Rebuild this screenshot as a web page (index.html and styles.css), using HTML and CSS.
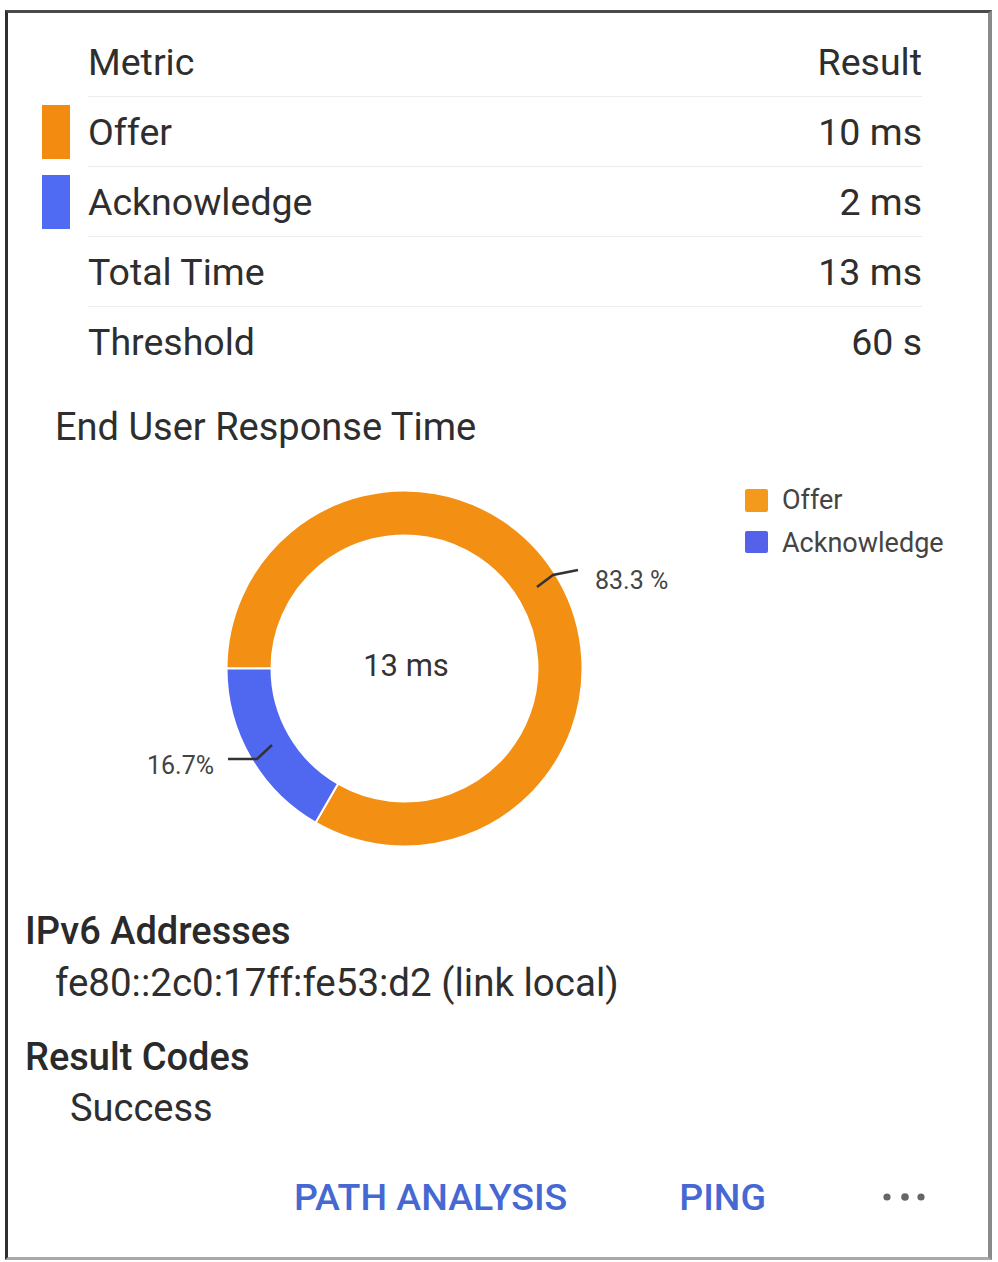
FILE: index.html
```html
<!DOCTYPE html>
<html lang="en">
<head>
<meta charset="utf-8">
<title>End User Response Time</title>
<link rel="stylesheet" href="styles.css">
</head>
<body>
<div class="frame">
  <div class="metrics">
    <div class="mrow">
      <span class="swatch"></span>
      <div class="mrow-main"><span class="label">Metric</span><span class="value">Result</span></div>
    </div>
    <div class="mrow">
      <span class="swatch offer"></span>
      <div class="mrow-main"><span class="label">Offer</span><span class="value">10 ms</span></div>
    </div>
    <div class="mrow">
      <span class="swatch ack"></span>
      <div class="mrow-main"><span class="label">Acknowledge</span><span class="value">2 ms</span></div>
    </div>
    <div class="mrow">
      <span class="swatch"></span>
      <div class="mrow-main"><span class="label">Total Time</span><span class="value">13 ms</span></div>
    </div>
    <div class="mrow last">
      <span class="swatch"></span>
      <div class="mrow-main"><span class="label">Threshold</span><span class="value">60 s</span></div>
    </div>
  </div>

  <section class="chart">
    <h2 class="chart-title">End User Response Time</h2>
    <svg class="chart-svg" width="980" height="454" viewBox="0 0 980 454">
      <path class="seg-offer" d="M 218.5 216.5 A 178 178 0 1 1 307.5 370.65 L 330 331.68 A 133 133 0 1 0 263.5 216.5 Z"/>
      <path class="seg-ack" d="M 307.5 370.65 A 178 178 0 0 1 218.5 216.5 L 263.5 216.5 A 133 133 0 0 0 330 331.68 Z"/>
      <text class="center-label" x="398" y="213">13 ms</text>
      <polyline class="leader" points="529,135 545,123 570,118"/>
      <text class="pct" x="587" y="128">83.3 %</text>
      <polyline class="leader" points="220,307 249,307 264,293"/>
      <text class="pct end" x="206" y="313">16.7%</text>
      <rect class="lg-offer" x="737" y="37" width="23" height="23" rx="2"/>
      <text class="legend" x="774" y="48">Offer</text>
      <rect class="lg-ack" x="737" y="79" width="23" height="22" rx="2"/>
      <text class="legend" x="774" y="91">Acknowledge</text>
    </svg>
  </section>

  <section class="info">
    <div class="info-group">
      <div class="info-head">IPv6 Addresses</div>
      <div class="info-addr">fe80::2c0:17ff:fe53:d2 (link local)</div>
    </div>
    <div class="info-group">
      <div class="info-head">Result Codes</div>
      <div class="info-code">Success</div>
    </div>
  </section>

  <div class="actions">
    <span class="action">PATH ANALYSIS</span>
    <span class="action">PING</span>
    <svg class="more" width="50" height="14" viewBox="0 0 50 14">
      <circle cx="9" cy="7" r="3.6"/>
      <circle cx="27" cy="7" r="3.8"/>
      <circle cx="43" cy="7" r="3.6"/>
    </svg>
  </div>
</div>
</body>
</html>
```

FILE: styles.css
```css
html, body {
  margin: 0;
  padding: 0;
  background: #ffffff;
}

body {
  font-family: Roboto, "Liberation Sans", Arial, sans-serif;
  color: #2e2e2e;
}

.frame {
  box-sizing: border-box;
  margin: 10px 0 0 5px;
  width: 987px;
  height: 1250px;
  border-left: 3px solid #2f2f2f;
  border-top: 3px solid #4a4a4a;
  border-right: 4px solid #8a8a8a;
  border-bottom: 3px solid #a9a9a9;
  background: #fff;
}

/* metrics table */
.metrics {
  padding: 14px 66px 0 34px;
}

.mrow {
  display: flex;
  align-items: center;
  height: 70px;
}

.swatch {
  flex: none;
  width: 28px;
  height: 54px;
  margin-right: 18px;
}

.swatch.offer {
  background: #f38b10;
}

.swatch.ack {
  background: #4f6bf3;
}

.mrow-main {
  flex: 1;
  align-self: stretch;
  display: flex;
  justify-content: space-between;
  align-items: center;
  border-bottom: 1px solid #ececec;
  font-size: 37.5px;
}

.mrow.last .mrow-main {
  border-bottom: none;
}

/* chart */
.chart {
  margin-top: 25px;
}

.chart-title {
  margin: 0;
  padding-left: 47px;
  font-size: 38px;
  font-weight: 400;
  line-height: 50px;
  height: 50px;
  color: #2e2e2e;
}

.chart-svg {
  display: block;
}

.seg-offer {
  fill: #f39014;
  stroke: #ffffff;
  stroke-width: 2;
}

.seg-ack {
  fill: #5067ef;
  stroke: #ffffff;
  stroke-width: 2;
}

.center-label {
  font-family: Roboto, "Liberation Sans", Arial, sans-serif;
  font-size: 31px;
  fill: #333;
  text-anchor: middle;
  dominant-baseline: central;
}

.leader {
  fill: none;
  stroke: #333;
  stroke-width: 2.5;
}

.pct {
  font-family: Roboto, "Liberation Sans", Arial, sans-serif;
  font-size: 25px;
  fill: #444;
  dominant-baseline: central;
}

.pct.end {
  text-anchor: end;
}

.lg-offer {
  fill: #f39a1c;
}

.lg-ack {
  fill: #5461e8;
}

.legend {
  font-family: Roboto, "Liberation Sans", Arial, sans-serif;
  font-size: 27px;
  fill: #444;
  dominant-baseline: central;
}

/* info */
.info {
  padding-left: 17px;
}

.info-group + .info-group {
  margin-top: 24px;
}

.info-head {
  font-size: 38px;
  font-weight: 500;
  line-height: 51px;
  color: #2a2a2a;
}

.info-addr {
  padding-left: 30px;
  font-size: 38.5px;
  line-height: 51px;
}

.info-code {
  padding-left: 45px;
  font-size: 38px;
  line-height: 51px;
}

/* actions */
.actions {
  margin-top: 38px;
  height: 50px;
  display: flex;
  justify-content: flex-end;
  align-items: center;
  gap: 112px;
  padding-right: 60px;
}

.action {
  font-size: 37.5px;
  font-weight: 500;
  color: #4568d2;
  letter-spacing: 0;
}

.more {
  display: block;
  fill: #666;
}
```
